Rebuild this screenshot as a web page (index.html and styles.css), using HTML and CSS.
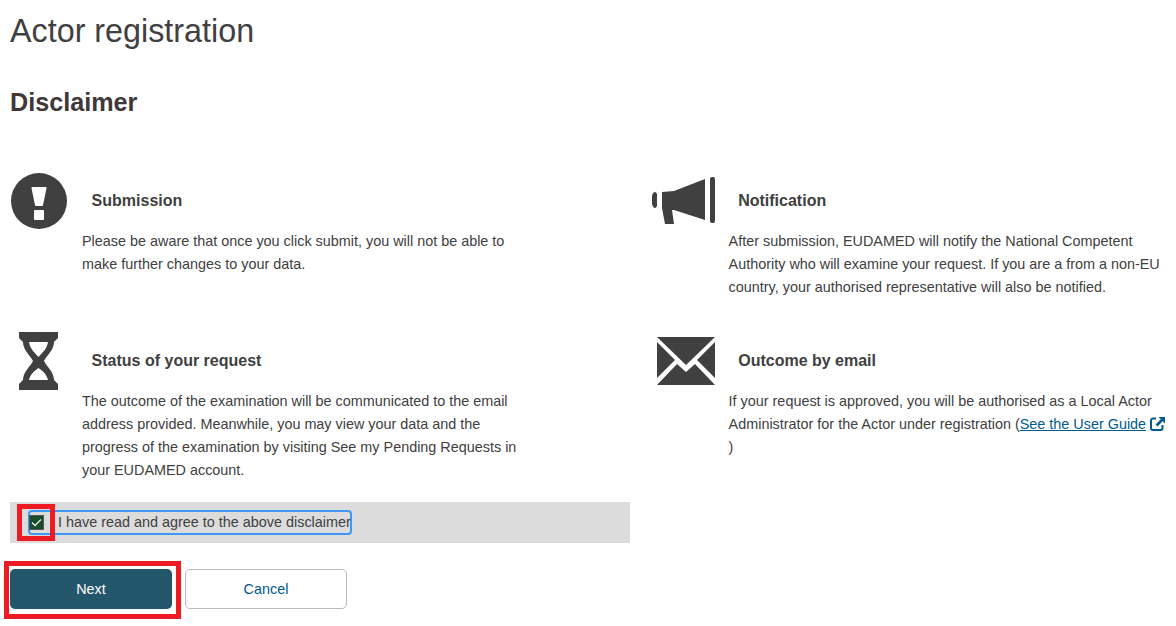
FILE: index.html
```html
<!DOCTYPE html>
<html lang="en">
<head>
<meta charset="utf-8">
<title>Actor registration</title>
<link rel="stylesheet" href="styles.css">
</head>
<body>
<main class="page">
  <h1 class="title">Actor registration</h1>
  <h2 class="subtitle">Disclaimer</h2>
  <section class="grid">
    <article class="item">
      <div class="item-head">
        <span class="icon-box">
          <svg class="icon icon-alert" width="56" height="56" viewBox="0 0 56 56"><circle cx="28" cy="28" r="28" fill="#404040"/><path d="M21.5 14h13a1 1 0 0 1 1 1.2L32 32.2a1 1 0 0 1-1 .8h-6a1 1 0 0 1-1-.8L20.500 15.200a1 1 0 0 1 1-1.200z" fill="#fff"/><rect x="23" y="37" width="10" height="10" rx="1" fill="#fff"/></svg>
        </span>
        <h3 class="item-title">Submission</h3>
      </div>
      <p class="item-text">Please be aware that once you click submit, you will not be able to make further changes to your data.</p>
    </article>
    <article class="item">
      <div class="item-head">
        <span class="icon-box">
          <svg class="icon icon-mega" width="64" height="48" viewBox="0 0 64 48"><path d="M10 15L22 14L53 2V43L22 33H20L22 47H13L10 31Z" fill="#404040"/><path d="M5 17v12a3 6 0 0 1-5-6a3 6 0 0 1 5-6z" fill="#404040"/><rect x="58" y="0" width="5" height="46" rx="2" fill="#404040"/></svg>
        </span>
        <h3 class="item-title">Notification</h3>
      </div>
      <p class="item-text">After submission, EUDAMED will notify the National Competent Authority who will examine your request. If you are a from a non-EU country, your authorised representative will also be notified.</p>
    </article>
    <article class="item">
      <div class="item-head">
        <span class="icon-box">
          <svg class="icon icon-glass" width="40" height="58" viewBox="0 0 40 58"><path fill-rule="evenodd" d="M0 0H39V6L35 10C35 18 28 23 25 29C28 35 35 40 35 48L39 52V58H0V52L4 48C4 40 11 35 14 29C11 23 4 18 4 10L0 6ZM10 10C11 17 16 21 19.500 25C23 21 28 17 29 10ZM10 48H29C28 43 24 39 19.500 36C15 39 11 43 10 48Z" fill="#404040"/></svg>
        </span>
        <h3 class="item-title">Status of your request</h3>
      </div>
      <p class="item-text">The outcome of the examination will be communicated to the email address provided. Meanwhile, you may view your data and the progress of the examination by visiting See my Pending Requests in your EUDAMED account.</p>
    </article>
    <article class="item">
      <div class="item-head">
        <span class="icon-box">
          <svg class="icon icon-mail" width="58" height="48" viewBox="0 0 58 48"><path d="M0 0H58L29 28Z" fill="#404040"/><path d="M0 5V41L18 23Z" fill="#404040"/><path d="M58 5V41L40 23Z" fill="#404040"/><path d="M0 48L20 27L29 35L38 27L58 48Z" fill="#404040"/></svg>
        </span>
        <h3 class="item-title">Outcome by email</h3>
      </div>
      <p class="item-text">If your request is approved, you will be authorised as a Local Actor Administrator for the Actor under registration (<a class="link" href="#">See the User Guide</a> <svg class="ext" width="15" height="15" viewBox="0 0 15 15"><path d="M6 2.500H3a2 2 0 0 0-2 2V12a2 2 0 0 0 2 2h7.500a2 2 0 0 0 2-2V9" fill="none" stroke="#005a8c" stroke-width="2"/><path d="M8.500 1H15V7.500L12.700 5.200L7.500 10.400L5.600 8.500L10.800 3.300Z" fill="#005a8c"/></svg> )</p>
    </article>
  </section>
  <div class="agree">
    <label class="agree-label">
      <span class="check"><svg width="11" height="9" viewBox="0 0 11 9"><path d="M1 4.500L4 7.500L10 1.500" fill="none" stroke="#e6efe6" stroke-width="1.300"/></svg></span>
      <span class="agree-text">I have read and agree to the above disclaimer</span>
    </label>
    <span class="mark mark-check"></span>
  </div>
  <div class="actions">
    <button class="btn btn-primary" type="button">Next<span class="mark mark-next"></span></button>
    <button class="btn btn-secondary" type="button">Cancel</button>
  </div>
</main>
</body>
</html>
```
FILE: styles.css
```css
* { box-sizing: border-box; }
html, body { margin: 0; padding: 0; background: #fff; }
body {
  font-family: "Liberation Sans", Arial, sans-serif;
  font-size: 14.4px;
  color: #404040;
  width: 1176px;
  height: 626px;
  overflow: hidden;
}
.page { padding: 0 0 0 10px; }
.title {
  margin: 0;
  padding-top: 12px;
  font-size: 32.3px;
  line-height: 38px;
  font-weight: 400;
  color: #404040;
}
.subtitle {
  margin: 0;
  padding-top: 37px;
  font-size: 25.2px;
  line-height: 30px;
  font-weight: 700;
  color: #403838;
}
.grid {
  margin-top: 54px;
  display: grid;
  grid-template-columns: 646.6px 1fr;
  grid-template-rows: 160px auto;
}
.item { min-width: 0; }
.item-head { display: flex; align-items: center; height: 59px; }
.icon-box { width: 81.6px; flex: none; display: flex; align-items: center; }
.icon { display: block; flex: none; }
.icon-alert { margin-left: 1px; }
.icon-glass { margin-left: 9px; }
.icon-mega { margin-left: -5px; }
.item-title { margin: 0; font-size: 16px; line-height: 20px; font-weight: 700; color: #404040; }
.item-text { margin: 0 0 0 72px; width: 441px; line-height: 23px; color: #404040; }
.link { color: #005a8c; text-decoration: underline; }
.ext { vertical-align: -2px; }
.agree {
  position: relative;
  margin-top: 20px;
  width: 620px;
  height: 41px;
  background: #dcdcdc;
  display: flex;
  align-items: center;
  padding-left: 18px;
}
.agree-label {
  display: flex;
  align-items: center;
  gap: 14px;
  height: 25px;
  width: 324px;
  margin-top: -1px;
  padding-left: 1px;
  border: 2px solid #3d97f5;
  border-radius: 4px;
  white-space: nowrap;
}
.check {
  width: 15px;
  height: 15px;
  flex: none;
  margin-left: -2px;
  background: #1a4d2b;
  border: 1px solid #555;
  display: flex;
  align-items: center;
  justify-content: center;
}
.actions { margin-top: 26px; display: flex; gap: 13px; }
.btn {
  position: relative;
  width: 162px;
  height: 40px;
  border-radius: 5px;
  font: 14.4px "Liberation Sans", Arial, sans-serif;
}
.btn-primary { background: #24566b; color: #fff; border: 0; }
.btn-secondary { background: #fff; color: #005a8c; border: 1px solid #bbb; }
.mark { position: absolute; border: 5px solid #ed1c24; pointer-events: none; }
.mark-check { left: 7px; top: 2px; width: 38px; height: 37px; }
.mark-next { left: -6px; top: -8px; width: 177px; height: 58px; }
```
